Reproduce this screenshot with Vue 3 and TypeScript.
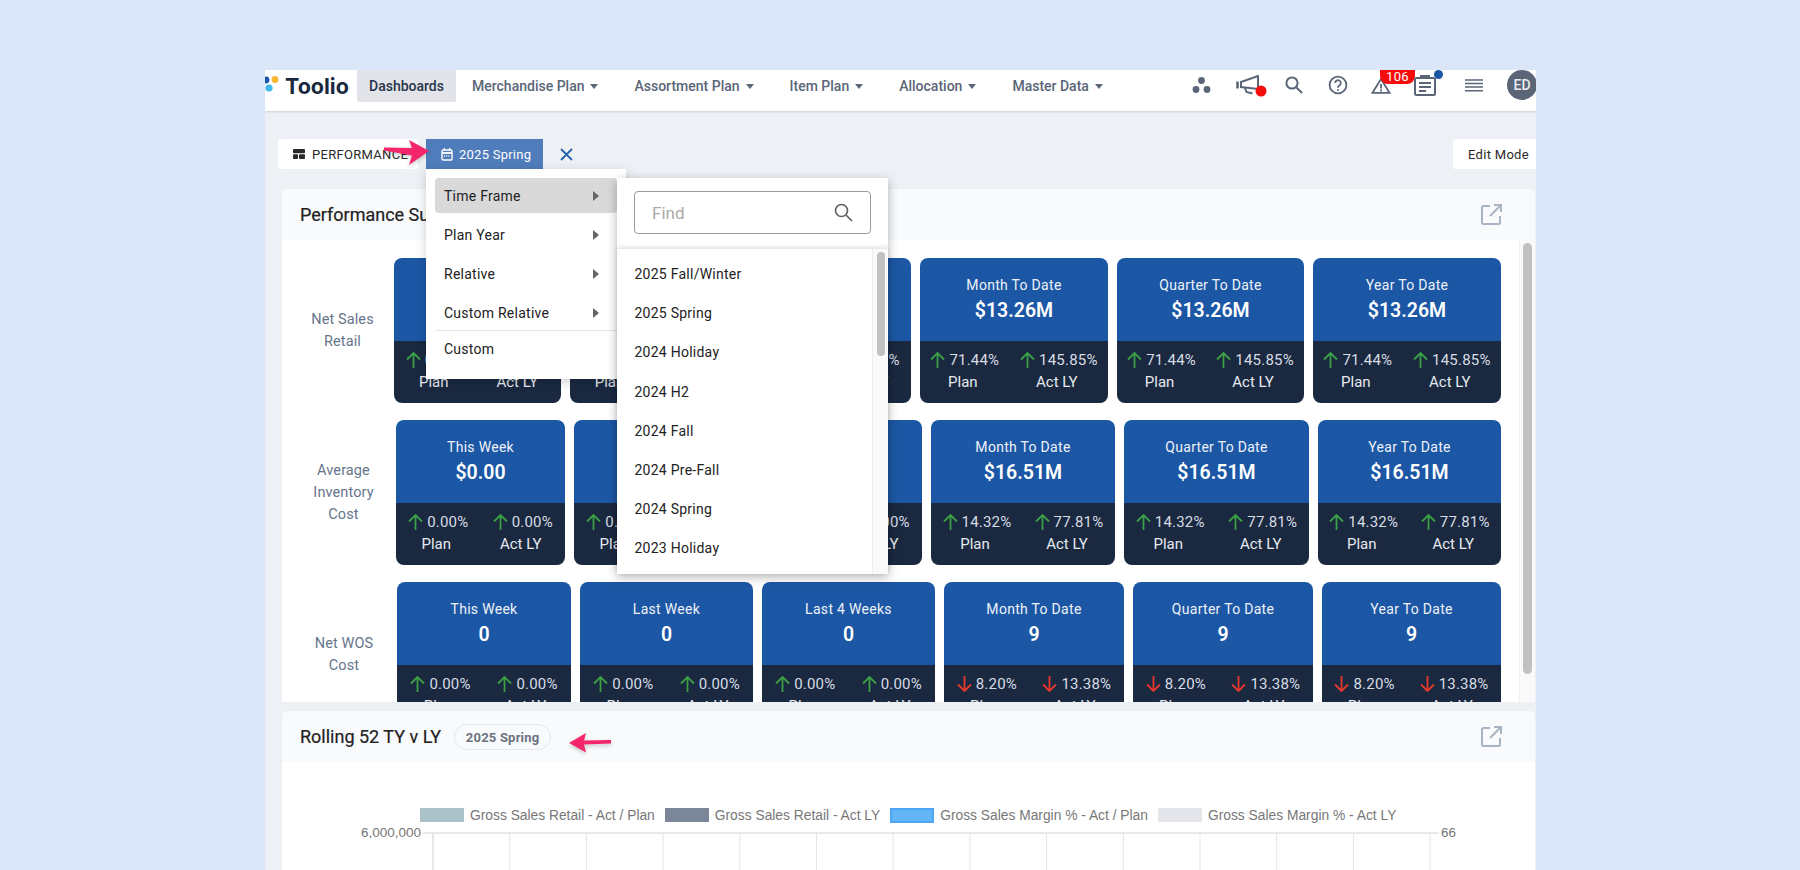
<script setup lang="ts">
interface Card { title: string; value: string; plan: string; ly: string; down?: boolean }
interface Row { label: string[]; labelWidth: number; widths: number[]; cards: Card[] }

const navItems = ['Merchandise Plan', 'Assortment Plan', 'Item Plan', 'Allocation', 'Master Data']

function makeCards(zero: string, value: string, plan: string, ly: string, down = false): Card[] {
  return [
    { title: 'This Week', value: zero, plan: '0.00%', ly: '0.00%' },
    { title: 'Last Week', value: zero, plan: '0.00%', ly: '0.00%' },
    { title: 'Last 4 Weeks', value: zero, plan: '0.00%', ly: '0.00%' },
    { title: 'Month To Date', value, plan, ly, down },
    { title: 'Quarter To Date', value, plan, ly, down },
    { title: 'Year To Date', value, plan, ly, down },
  ]
}

const rows: Row[] = [
  { label: ['Net Sales', 'Retail'], labelWidth: 85, widths: [167, 166, 166, 188, 187, 188], cards: makeCards('$0.00', '$13.26M', '71.44%', '145.85%') },
  { label: ['Average', 'Inventory', 'Cost'], labelWidth: 87, widths: [169, 169.5, 169.5, 184, 185, 183], cards: makeCards('$0.00', '$16.51M', '14.32%', '77.81%') },
  { label: ['Net WOS', 'Cost'], labelWidth: 88, widths: [174, 173, 173, 180, 180, 179], cards: makeCards('0', '9', '8.20%', '13.38%', true) },
]

const rowColumns = (r: Row) => `${r.labelWidth}px ${r.widths.map((w) => `${w}px`).join(' ')}`

const menuItems = ['Time Frame', 'Plan Year', 'Relative', 'Custom Relative']
const frames = ['2025 Fall/Winter', '2025 Spring', '2024 Holiday', '2024 H2', '2024 Fall', '2024 Pre-Fall', '2024 Spring', '2023 Holiday', '2023 H2']

const legend = [
  { text: 'Gross Sales Retail - Act / Plan', cls: 'sw-a' },
  { text: 'Gross Sales Retail - Act LY', cls: 'sw-b' },
  { text: 'Gross Sales Margin % - Act / Plan', cls: 'sw-c' },
  { text: 'Gross Sales Margin % - Act LY', cls: 'sw-d' },
]
const gridX = Array.from({ length: 14 }, (_, i) => 151 + i * 76.7)
</script>

<template>
  <div class="stage">
    <div class="window">
      <header class="topbar">
        <div class="logo">
          <svg class="logo-dots" width="20" height="26" viewBox="0 0 20 26">
            <circle cx="1" cy="7" r="3.4" fill="#1c57a5" />
            <circle cx="10" cy="6.5" r="3.4" fill="#f7b733" />
            <circle cx="4" cy="15" r="3.6" fill="#3fb8ee" />
          </svg>
          <span class="logo-text">Toolio</span>
        </div>
        <nav class="nav">
          <a class="nav-active">Dashboards</a>
          <a v-for="n in navItems" :key="n" class="nav-item">{{ n }}<i class="caret"></i></a>
        </nav>
        <div class="tools">
          <svg class="t-cluster" width="19" height="16" viewBox="0 0 19 16" fill="#5a6578">
            <circle cx="9.5" cy="3.5" r="3.4" /><circle cx="4" cy="12.5" r="3.4" /><circle cx="15" cy="12.5" r="3.4" />
          </svg>
          <svg class="t-mega" width="31" height="22" viewBox="0 0 31 22">
            <g fill="none" stroke="#5a6578" stroke-width="2">
              <path d="M1.5 6.5v7" stroke-width="2.6" />
              <path d="M5 7 22 1v13L5 12Z" />
              <path d="M9 13l1.5 4 6 1.5" />
            </g>
            <circle cx="25" cy="16" r="5.5" fill="#f60d0d" />
          </svg>
          <svg class="t-search" width="18" height="18" viewBox="0 0 18 18" fill="none" stroke="#5a6578" stroke-width="2">
            <circle cx="7" cy="7" r="5.6" /><path d="M11 11l6 6" />
          </svg>
          <svg class="t-help" width="20" height="20" viewBox="0 0 20 20" fill="none" stroke="#5a6578" stroke-width="1.8">
            <circle cx="10" cy="10" r="8.4" />
            <path d="M7.2 8a2.8 2.8 0 1 1 4.4 2.3c-1 .7-1.6 1.2-1.6 2.5" />
            <circle cx="10" cy="15" r="1" fill="#5a6578" stroke="none" />
          </svg>
          <div class="t-warn">
            <svg width="20" height="17" viewBox="0 0 20 17" fill="none" stroke="#5a6578" stroke-width="1.8">
              <path d="M10 2 1.5 15.8h17Z" /><path d="M10 7v4.6M10 12.6v1.8" />
            </svg>
            <span class="badge">106</span>
          </div>
          <div class="t-clip">
            <svg width="22" height="22" viewBox="0 0 22 22" fill="none" stroke="#5a6578" stroke-width="2">
              <rect x="1" y="4" width="20" height="17" rx="1.5" />
              <path d="M7 4.5V2h8v2.5" />
              <path d="M5 9h12M5 13h12M5 17h7" />
            </svg>
            <span class="blue-dot"></span>
          </div>
          <svg class="t-menu" width="18" height="13" viewBox="0 0 18 13" fill="none" stroke="#5a6578" stroke-width="1.4">
            <path d="M0 1h18M0 4.5h18M0 8h18M0 11.7h18" />
          </svg>
          <div class="avatar">ED</div>
        </div>
      </header>

      <main class="page">
        <div class="toolbar">
          <button class="btn perf">
            <svg width="12" height="10" viewBox="0 0 12 10" fill="#2a2a2a">
              <rect width="12" height="4.2" rx="1" /><rect y="5.2" width="5" height="4.8" rx="1" /><rect x="6" y="5.2" width="6" height="4.8" rx="1" />
            </svg>
            PERFORMANCE
          </button>
          <button class="btn period">
            <svg width="12" height="13" viewBox="0 0 12 13" fill="none" stroke="#fff" stroke-width="1.4">
              <rect x="1" y="2" width="10" height="10" rx="1.2" />
              <path d="M1 5h10" stroke-width="1.8" /><path d="M3.4 0v2.5M8.6 0v2.5" />
              <path d="M3 8h6" stroke-dasharray="1 1.2" />
            </svg>
            2025 Spring
          </button>
          <svg class="close" width="13" height="13" viewBox="0 0 13 13" fill="none" stroke="#2563ab" stroke-width="1.8">
            <path d="M1 1l11 11M12 1 1 12" />
          </svg>
          <button class="btn edit">Edit Mode</button>
        </div>

        <section class="panel first">
          <div class="panel-head">
            <h2>Performance Summary</h2>
            <svg class="open" width="21" height="21" viewBox="0 0 21 21" fill="none" stroke="#a8b4c4" stroke-width="2">
              <path d="M9 2H2.5A1.5 1.5 0 0 0 1 3.5v15A1.5 1.5 0 0 0 2.5 20h15a1.5 1.5 0 0 0 1.5-1.5V12" />
              <path d="M13 1h7v7M20 1 9 12" />
            </svg>
          </div>
          <div class="panel-body">
            <div class="rows">
              <div v-for="r in rows" :key="r.label.join()" class="row" :style="{ gridTemplateColumns: rowColumns(r) }">
                <div class="row-label"><span v-for="l in r.label" :key="l">{{ l }}</span></div>
                <article v-for="c in r.cards" :key="c.title" class="card">
                  <div class="card-head">
                    <div class="card-title">{{ c.title }}</div>
                    <div class="card-value">{{ c.value }}</div>
                  </div>
                  <div class="card-foot">
                    <div v-for="m in [{ v: c.plan, l: 'Plan' }, { v: c.ly, l: 'Act LY' }]" :key="m.l" class="metric">
                      <div class="metric-top">
                        <svg width="15" height="16" viewBox="0 0 15 16" fill="none" :stroke="c.down ? '#e5392c' : '#3a9f45'" stroke-width="1.8">
                          <path v-if="c.down" d="M7.5 0v15M1 8.5 7.5 15 14 8.5" />
                          <path v-else d="M7.5 16V1M1 7.5 7.5 1 14 7.5" />
                        </svg>
                        <span>{{ m.v }}</span>
                      </div>
                      <div class="metric-label">{{ m.l }}</div>
                    </div>
                  </div>
                </article>
              </div>
            </div>
            <div class="track"><div class="thumb"></div></div>
          </div>
        </section>

        <section class="panel second">
          <div class="panel-head">
            <h2>Rolling 52 TY v LY</h2>
            <span class="chip">2025 Spring</span>
            <svg class="open" width="21" height="21" viewBox="0 0 21 21" fill="none" stroke="#a8b4c4" stroke-width="2">
              <path d="M9 2H2.5A1.5 1.5 0 0 0 1 3.5v15A1.5 1.5 0 0 0 2.5 20h15a1.5 1.5 0 0 0 1.5-1.5V12" />
              <path d="M13 1h7v7M20 1 9 12" />
            </svg>
          </div>
          <div class="chart">
            <div class="legend">
              <div v-for="l in legend" :key="l.text" class="legend-item">
                <i class="swatch" :class="l.cls"></i><span>{{ l.text }}</span>
              </div>
            </div>
            <svg class="plot" width="1252" height="44" viewBox="0 0 1252 44">
              <line v-for="x in gridX" :key="x" :x1="x" :x2="x" y1="7" y2="44" :stroke="x === 151 ? '#cfcfcf' : '#e6e6e6'" />
              <line x1="141" x2="1157" y1="7" y2="7" stroke="#e2e2e2" stroke-width="1.5" />
              <text x="139" y="11" text-anchor="end" class="axis">6,000,000</text>
              <text x="1159" y="11" class="axis">66</text>
            </svg>
          </div>
        </section>
      </main>

      <div class="menu">
        <div v-for="(m, i) in menuItems" :key="m" class="menu-item" :class="{ on: i === 0 }">
          <span>{{ m }}</span><i class="tri"></i>
        </div>
        <div class="menu-sep"></div>
        <div class="menu-item plain"><span>Custom</span></div>
      </div>

      <div class="submenu">
        <div class="find">
          <div class="find-box">
            <span>Find</span>
            <svg width="19" height="19" viewBox="0 0 19 19" fill="none" stroke="#5f6368" stroke-width="1.7">
              <circle cx="7.5" cy="7.5" r="6" /><path d="M12 12l6 6" />
            </svg>
          </div>
        </div>
        <div class="list">
          <ul>
            <li v-for="f in frames" :key="f">{{ f }}</li>
          </ul>
          <div class="list-track"><div class="list-thumb"></div></div>
        </div>
      </div>

      <svg class="pink pink-a" width="52" height="28" viewBox="0 0 52 28">
        <path d="M47 12 27 1l3 8L2 8.5v3l28 5-3 9.5Z" fill="#f5256b" />
      </svg>
      <svg class="pink pink-b" width="52" height="28" viewBox="0 0 52 28">
        <path d="M4 13 21 3l-2 7.5 27-.5v3.5l-27 1 2 8Z" fill="#f5256b" />
      </svg>
    </div>
  </div>
</template>

<style>
html, body { margin: 0; padding: 0; background: #dbe7f9; overflow: hidden; }
</style>

<style scoped>
* { box-sizing: border-box; }
.stage {
  width: 1800px; height: 870px; padding: 70px 0 0 265px; background: #dbe7f9;
  font-family: Roboto, "Noto Sans", sans-serif; overflow: hidden;
}
.window { position: relative; width: 1271px; height: 800px; background: #edf0f5; overflow: hidden; }

.topbar {
  height: 41px; background: #fff; display: flex; align-items: flex-start;
  box-shadow: 0 1px 2px rgba(0,0,0,.14); position: relative;
}
.logo { width: 92px; height: 32px; display: flex; align-items: center; padding-left: 20px; position: relative; }
.logo-dots { position: absolute; left: 0; top: 3px; }
.logo-text { font-size: 21.5px; font-weight: 700; color: #1a2940; font-family: Inter, Roboto, sans-serif; }
.nav { display: flex; align-items: flex-start; font-size: 14px; font-weight: 500; }
.nav a { height: 32px; display: flex; align-items: center; }
.nav-active { background: #e2e4e9; color: #263449; padding: 0 12px; border-radius: 0 0 2px 2px; width: 99px; margin-right: -2px; }
.nav-item { color: #5a6578; padding: 0 18px; white-space: nowrap; }
.caret { width: 0; height: 0; margin-left: 6px; border: 4.5px solid transparent; border-top: 5px solid #5a6578; border-bottom: 0; }
.tools { margin-left: auto; display: flex; align-items: center; height: 30px; margin-right: -1px; }
.t-mega { margin-left: 25px; margin-top: 1px; }
.t-search { margin-left: 18px; margin-top: -1px; }
.t-help { margin-left: 25px; }
.t-warn { margin-left: 23px; position: relative; display: flex; margin-top: 1px; }
.badge {
  position: absolute; left: 9px; top: -7px; width: 35px; height: 14px; background: #f60d0d; color: #fff;
  font-size: 13px; line-height: 13px; text-align: center; border-radius: 0 0 8px 8px; letter-spacing: .3px;
}
.t-clip { margin-left: 23px; position: relative; display: flex; margin-top: -1px; }
.blue-dot { position: absolute; right: -7px; top: -4px; width: 9px; height: 9px; border-radius: 50%; background: #1c57a5; }
.t-menu { margin-left: 29px; }
.avatar {
  margin-left: 24px; width: 30px; height: 30px; border-radius: 50%; background: #5a6578; color: #e8ebf0;
  font-size: 14px; font-weight: 500; display: flex; align-items: center; justify-content: center;
}

.page { padding: 28px 0 0; }
.toolbar { display: flex; align-items: center; height: 30px; padding-left: 13px; }
.btn {
  height: 30px; border: 0; border-radius: 3px; background: #fff; display: flex; align-items: center;
  font-family: inherit; font-size: 13px; font-weight: 400; color: #2a2a2a; padding: 0; white-space: nowrap;
}
.perf { width: 140px; padding-left: 15px; gap: 7px; letter-spacing: .3px; }
.period { width: 117px; margin-left: 8px; padding-left: 15px; gap: 6px; background: #4f7cba; color: #fff; letter-spacing: .25px; border-radius: 0; }
.close { margin-left: 17px; }
.edit { margin-left: auto; width: 83px; padding-left: 15px; border-radius: 3px 0 0 3px; letter-spacing: .3px; }

.panel { margin: 0 1px 0 17px; border-radius: 6px 6px 0 0; overflow: hidden; background: #fff; }
.first { margin-top: 20px; height: 513px; }
.second { margin-top: 9px; }
.panel-head { height: 51px; background: #f9fafc; display: flex; align-items: center; padding-left: 18px; position: relative; }
.panel-head h2 { margin: 0; font-size: 18px; font-weight: 400; color: #222; white-space: nowrap; -webkit-text-stroke: .2px #222; }
.open { position: absolute; left: 1199px; top: 15px; }
.chip {
  margin-left: 13px; height: 26px; width: 97px; border: 1px solid #e3e6eb; border-radius: 13px; margin-top: 1px;
  font-size: 13px; font-weight: 700; color: #6b7280; display: flex; align-items: center; justify-content: center; letter-spacing: .2px;
}
.panel-body { height: 462px; display: flex; overflow: hidden; }
.rows { width: 1237px; padding: 18px 0 0 18px; flex: none; }
.row { display: grid; column-gap: 9px; margin-bottom: 17px; }
.row-label {
  display: flex; flex-direction: column; align-items: center; justify-content: center; text-align: center;
  font-size: 14.5px; font-weight: 400; line-height: 22px; color: #66758c; letter-spacing: .1px;
}
.card { height: 145px; border-radius: 8px; overflow: hidden; color: #fff; display: flex; flex-direction: column; }
.card-head { height: 83px; background: #1c57a5; padding-top: 17px; text-align: center; }
.card-title { font-size: 14px; font-weight: 400; line-height: 20px; color: #eef2f8; letter-spacing: .3px; }
.card-value { font-size: 19.5px; font-weight: 600; line-height: 28px; margin-top: 2px; color: #fff; }
.card-foot { height: 62px; background: #1a2940; display: flex; justify-content: space-around; padding-top: 7px; }
.metric { display: flex; flex-direction: column; align-items: center; }
.metric-top { display: flex; align-items: center; gap: 4px; height: 23px; font-size: 15px; color: #d7dce4; letter-spacing: .2px; }
.metric-label { height: 23px; line-height: 23px; font-size: 15px; color: #e6e9ef; margin-left: -4px; }
.track { flex: 1; background: #fafafa; border-left: 1px solid #f0f0f0; padding: 3px 0 0 3px; }
.thumb { width: 9px; height: 431px; border-radius: 5px; background: #c1c1c1; }

.chart { background: #fff; height: 120px; padding-top: 46px; }
.legend { display: flex; gap: 10px; padding-left: 138px; height: 18px; font-family: "Liberation Sans", Arial, sans-serif; font-size: 13.8px; color: #777; }
.legend-item { display: flex; align-items: center; gap: 6px; height: 14px; white-space: nowrap; }
.swatch { display: block; width: 44px; height: 14px; }
.sw-a { background: #aac2c8; }
.sw-b { background: #7b8698; }
.sw-c { background: #64b5f6; border: 2px solid #4ea5f5; height: 15px; }
.sw-d { background: #e4e6eb; }
.plot { display: block; }
.axis { font-family: "Liberation Sans", Arial, sans-serif; font-size: 13.5px; fill: #777; }

.menu {
  position: absolute; left: 161px; top: 99px; width: 199.5px; height: 210px; background: #fff; padding: 9px 9px 0;
  box-shadow: 0 3px 10px rgba(0,0,0,.18);
}
.menu-item {
  height: 35px; margin-bottom: 4px; border-radius: 4px; display: flex; align-items: center; justify-content: space-between;
  padding: 0 18px 0 9px; font-size: 14px; font-weight: 400; color: #222; letter-spacing: .25px;
}
.menu-item.on { background: #d9d9d9; }
.menu-item.plain { margin: 0; height: 35px; }
.tri { width: 0; height: 0; border: 5px solid transparent; border-left: 6px solid #666; border-right: 0; }
.menu-sep { height: 1px; background: #e6e6e6; margin-top: -4px; }

.submenu {
  position: absolute; left: 351.5px; top: 108px; width: 271.5px; height: 396px; background: #fff;
  box-shadow: 0 3px 10px rgba(0,0,0,.3); display: flex; flex-direction: column;
}
.find { height: 71px; padding: 13px 17px 0 17.5px; flex: none; }
.find-box {
  height: 43px; border: 1px solid #9a9a9a; border-radius: 4px; display: flex; align-items: center; justify-content: space-between;
  padding: 0 17px; font-size: 17px; color: #a9a9a9;
}
.list { flex: 1; display: flex; min-height: 0; overflow: hidden; box-shadow: 0 -2px 4px rgba(0,0,0,.12); }
.list ul { flex: 1; list-style: none; margin: 0; padding: 6px 0 0 18px; overflow: hidden; }
.list li { height: 39.2px; line-height: 39.2px; font-size: 14px; font-weight: 400; color: #222; letter-spacing: .25px; }
.list-track { width: 16px; background: #fafafa; border-left: 1px solid #eee; padding: 3px 0 0 4px; }
.list-thumb { width: 8px; height: 104px; border-radius: 4px; background: #c1c1c1; }

.pink { position: absolute; filter: drop-shadow(0 2px 2px rgba(0,0,0,.2)); }
.pink-a { left: 117px; top: 69px; }
.pink-b { left: 300px; top: 660px; }
</style>
